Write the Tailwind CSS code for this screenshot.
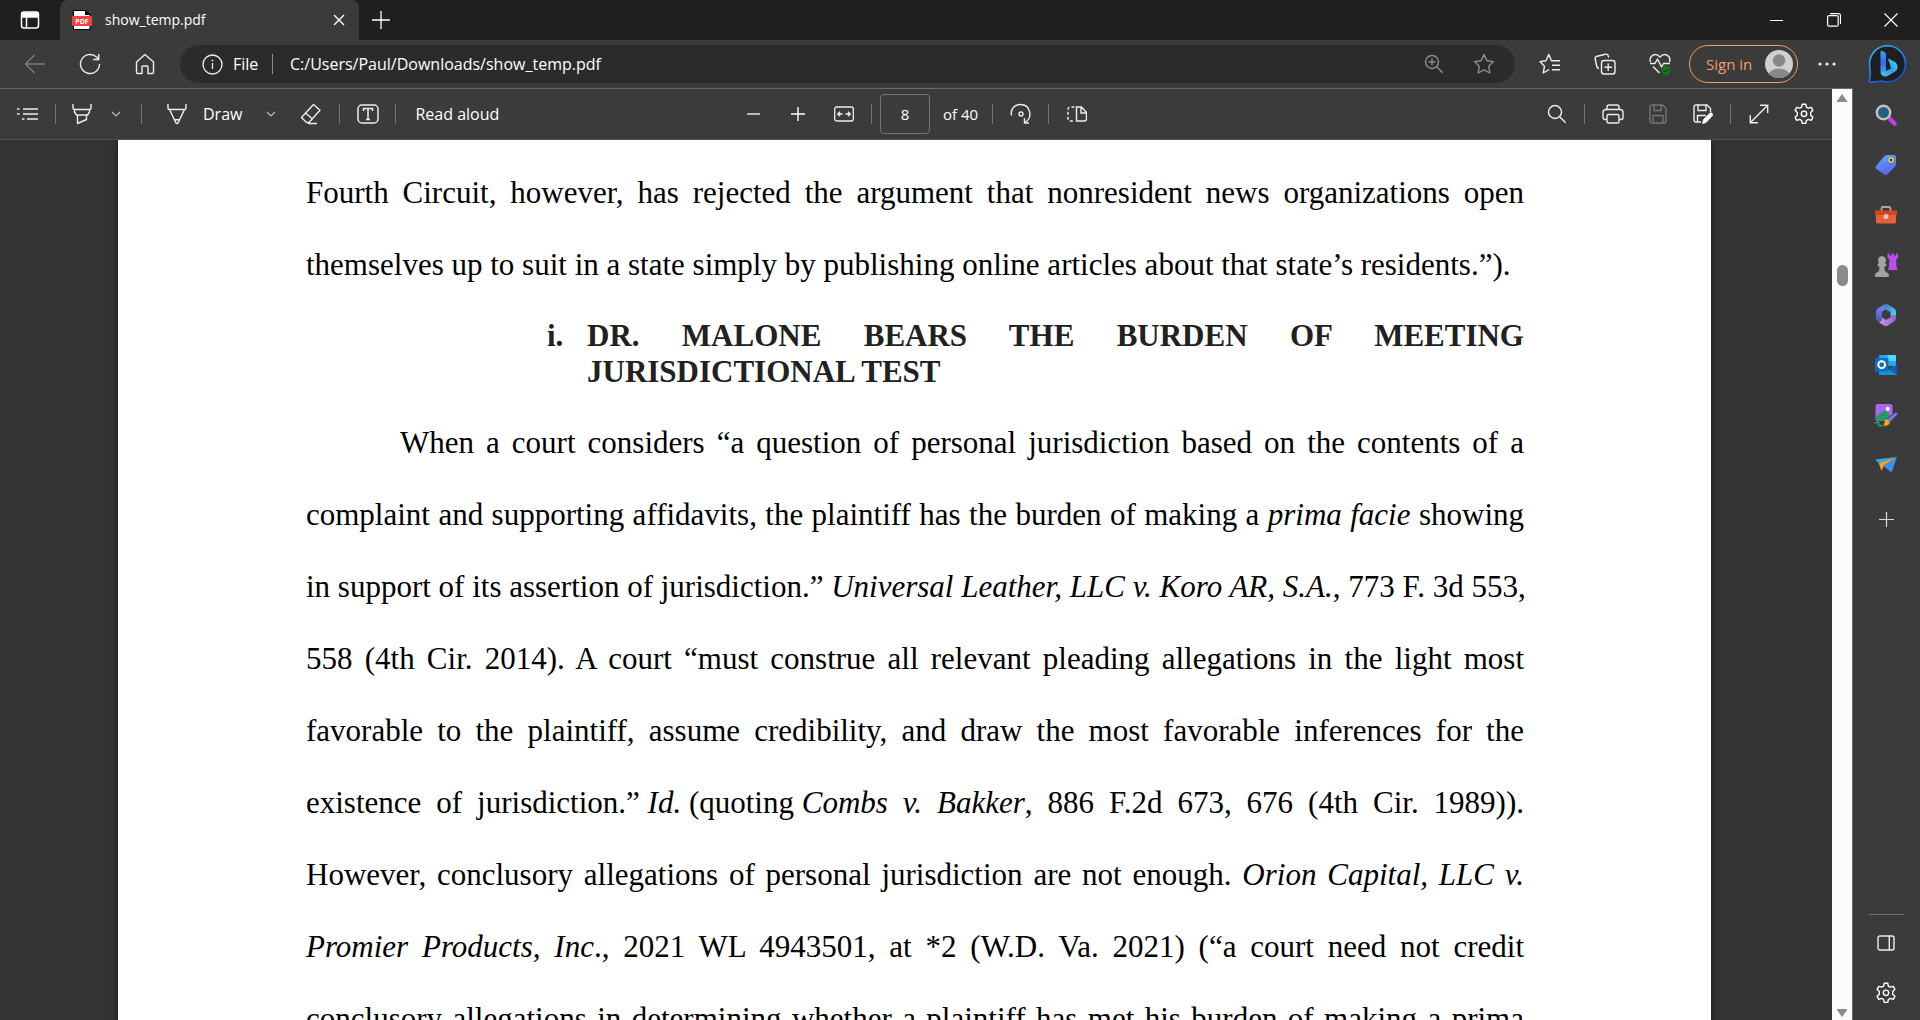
<!DOCTYPE html>
<html lang="en">
<head>
    <meta charset="UTF-8">
    <meta name="viewport" content="width=device-width, initial-scale=1.0">
    <title>show_temp.pdf</title>
    <script src="https://cdn.jsdelivr.net/npm/@tailwindcss/browser@4"></script>
</head>
<body class="h-screen overflow-hidden flex flex-col bg-[#3b3b3b] text-white font-['Open_Sans','Noto_Sans',sans-serif]">

    <!-- Shared icons -->
    <svg class="hidden">
        <symbol id="chevron" viewBox="0 0 10 10"><path d="M1 3l4 4 4-4" fill="none" stroke="#bbb" stroke-width="1.2"/></symbol>
        <symbol id="gear" viewBox="0 0 22 22">
            <g fill="none" stroke="currentColor" stroke-width="1.4" stroke-linejoin="round">
                <path d="M9.3 1.2h3.4l.7 2.9 1.9 1.1 2.9-.9 1.7 3-2.2 2.1v2.8l2.2 2.1-1.7 3-2.9-.9-1.9 1.1-.7 2.9H9.300l-.7-2.9-1.9-1.1-2.9.9-1.7-3 2.2-2.1V9.400L2.100 7.300l1.7-3 2.900.9 1.900-1.100z"/>
                <circle cx="11" cy="10.800" r="2.700"/>
            </g>
        </symbol>
    </svg>

    <!-- Tab strip -->
    <header class="h-10 shrink-0 flex items-end bg-[#1f1f1f]">
        <button class="w-[60px] h-10 grid place-items-center" aria-label="Tab actions">
            <svg width="20" height="20" viewBox="0 0 20 20" fill="none" stroke="#fff" stroke-width="1.5"><rect x="1.5" y="2" width="17" height="16" rx="2.5"/><path d="M2 3h16v4H2z" fill="#fff"/><path d="M6.500 7v11"/></svg>
        </button>
        <div class="w-[299px] h-10 pl-3 pr-2 flex items-center rounded-t-lg bg-[#3b3b3b]">
            <svg width="20" height="20" viewBox="0 0 20 20"><path d="M1.500.5h12l4.500 4v15H1.500z" fill="#fff" stroke="#000"/><path d="M13 0l5.500 5H13z" fill="#000"/><rect y="6" width="20" height="10" rx="1" fill="#f0423f"/><text x="10" y="13.5" text-anchor="middle" font-size="7" font-weight="700" fill="#fff">PDF</text></svg>
            <span class="ml-[13px] text-sm">show_temp.pdf</span>
            <button class="ml-auto size-6 grid place-items-center" aria-label="Close tab">
                <svg width="12" height="12" viewBox="0 0 12 12" stroke="#fff" stroke-width="1.4"><path d="M1 1l10 10M11 1L1 11"/></svg>
            </button>
        </div>
        <button class="w-11 h-10 grid place-items-center" aria-label="New tab">
            <svg width="18" height="18" viewBox="0 0 18 18" stroke="#fff" stroke-width="1.3"><path d="M9 0v18M0 9h18"/></svg>
        </button>
        <div class="ml-auto flex">
            <button class="w-[57px] h-10 grid place-items-center" aria-label="Minimize"><svg width="14" height="14" viewBox="0 0 14 14"><path d="M0 7.500h13" stroke="#fff"/></svg></button>
            <button class="w-[57px] h-10 grid place-items-center" aria-label="Restore"><svg width="14" height="14" viewBox="0 0 14 14" fill="none" stroke="#fff" stroke-width="1.2"><rect x=".6" y="2.6" width="10.6" height="10.6" rx="1.5"/><path d="M3 .6h8.500a2 2 0 0 1 2 2V11"/></svg></button>
            <button class="w-[58px] h-10 grid place-items-center" aria-label="Close"><svg width="14" height="14" viewBox="0 0 14 14" stroke="#fff" stroke-width="1.2"><path d="M.5.5l13 13M13.500.5l-13 13"/></svg></button>
        </div>
    </header>

    <!-- Address bar -->
    <nav class="h-12 shrink-0 flex items-center pl-[7px] pr-3">
        <button class="w-[55px] grid place-items-center text-[#7d7d7d]" aria-label="Back"><svg width="22" height="20" viewBox="0 0 22 20" fill="none" stroke="currentColor" stroke-width="1.3"><path d="M21 10H2M10.500 1L1.500 10l9 9"/></svg></button>
        <button class="w-[55px] grid place-items-center" aria-label="Refresh"><svg width="22" height="22" viewBox="0 0 22 22" fill="none" stroke="#eee" stroke-width="1.4"><path d="M20.500 11a9.500 9.500 0 1 1-3-6.900l2 2M19.700 1v5.500h-5.500"/></svg></button>
        <button class="w-[55px] grid place-items-center" aria-label="Home"><svg width="20" height="22" viewBox="0 0 20 22" fill="none" stroke="#eee" stroke-width="1.4" stroke-linejoin="round"><path d="M1.500 9L10 1.500 18.500 9v10.500a1 1 0 0 1-1 1H13v-6.500a1 1 0 0 0-1-1H8a1 1 0 0 0-1 1v6.500H2.500a1 1 0 0 1-1-1z"/></svg></button>
        <div class="flex-1 h-[38px] ml-2 pl-[22px] pr-4 flex items-center rounded-full bg-[#2b2b2b] text-base">
            <svg width="21" height="21" viewBox="0 0 21 21" fill="none" stroke="#eee" stroke-width="1.3"><circle cx="10.5" cy="10.5" r="9.5"/><path d="M10.500 9v6"/><circle cx="10.5" cy="6.5" r=".6" fill="#eee" stroke-width=".8"/></svg>
            <span class="w-[39px] ml-[10px]">File</span>
            <span class="w-px h-5 bg-[#8a8a8a]"></span>
            <input class="flex-1 ml-[17px] outline-none" type="text" aria-label="Address" value="C:/Users/Paul/Downloads/show_temp.pdf">
            <button class="w-[51px] grid place-items-center text-[#8f8f8f]" aria-label="Zoom"><svg width="20" height="20" viewBox="0 0 20 20" fill="none" stroke="currentColor" stroke-width="1.4"><circle cx="8" cy="8" r="6.5"/><path d="M12.700 12.700l6 6M8 4.500v7M4.500 8h7"/></svg></button>
            <button class="w-[30px] h-6 ml-[10px] grid place-items-center text-[#8f8f8f]" aria-label="Favorite"><svg width="22" height="22" viewBox="0 0 22 22" fill="none" stroke="currentColor" stroke-width="1.4" stroke-linejoin="round"><path d="M11 1.500l2.900 6.200 6.600.9-4.800 4.700 1.200 6.700-5.900-3.200L5.100 20l1.200-6.700L1.500 8.600l6.600-.9z"/></svg></button>
        </div>
        <div class="flex items-center ml-[7px]">
            <button class="w-[55px] grid place-items-center" aria-label="Favorites"><svg width="22" height="22" viewBox="0 0 22 22" fill="none" stroke="#eee" stroke-width="1.4" stroke-linejoin="round"><path d="M13 7.700h-.5L9.800 1.500 7 7.700l-6 .9 4.500 4.600L4.200 20l6-3.500M13 7.700h8M13 12.200h8M13 16.700h8"/></svg></button>
            <button class="w-[55px] grid place-items-center" aria-label="Collections"><svg width="22" height="22" viewBox="0 0 22 22" fill="none" stroke="#eee" stroke-width="1.4" stroke-linejoin="round"><rect x="7.5" y="7.5" width="13.5" height="13.5" rx="2.5"/><path d="M14.200 10.500v7.500M10.500 14.200H18M5 15.500c-1.500-.3-2-1-2.200-2L1.200 6c-.3-1.500.4-2.500 1.800-2.800l8.500-2c1.500-.3 2.500.5 2.800 1.800l.4 1.500"/></svg></button>
            <button class="w-[55px] grid place-items-center" aria-label="Browser essentials"><svg width="22" height="22" viewBox="0 0 22 22" fill="none" stroke="#eee" stroke-width="1.4" stroke-linejoin="round"><path d="M1.500 9C0 5 3 1.500 6.200 1.500c2 0 3.500.8 4.800 2.700 1.300-1.900 2.800-2.700 4.800-2.700C19 1.500 22 5 20.500 9M1 10.500h5l2.500-4.500 4 8 2-3.500H21M4 13.500l6.500 6.500"/><circle cx="17" cy="17.5" r="4.5" fill="#0f7b0f" stroke="none"/><path d="M15 17.500l1.500 1.500 2.500-2.700" stroke="#123" stroke-width="1"/></svg></button>
            <button class="w-[109px] h-[38px] ml-[2px] pl-4 pr-1 flex items-center justify-between rounded-full border border-[#f0a068] text-[#f0a068] text-[15px]">Sign in
                <svg width="28" height="28" viewBox="0 0 28 28"><clipPath id="face"><circle cx="14" cy="14" r="14"/></clipPath><g clip-path="url(#face)"><path d="M0 0h28v28H0z" fill="#d2d0ce"/><circle cx="14" cy="10.5" r="6.2" fill="#8a8886"/><ellipse cx="14" cy="25" rx="10.5" ry="6.5" fill="#8a8886"/></g></svg>
            </button>
            <button class="w-[58px] grid place-items-center" aria-label="Settings and more"><svg width="18" height="4" viewBox="0 0 18 4" fill="#eee"><circle cx="2" cy="2" r="1.6"/><circle cx="9" cy="2" r="1.6"/><circle cx="16" cy="2" r="1.6"/></svg></button>
            <button class="ml-3" aria-label="Discover"><svg width="40" height="40" viewBox="0 0 40 40">
                <defs>
                    <linearGradient id="ring" x1="0" y1="0" x2=".6" y2="1"><stop stop-color="#2cc5f0"/><stop offset=".6" stop-color="#1f7df0"/><stop offset="1" stop-color="#1a4fd8"/></linearGradient>
                    <linearGradient id="stem" x1="0" y1="0" x2="0" y2="1"><stop stop-color="#3aa5f8"/><stop offset=".5" stop-color="#2b6df5"/><stop offset="1" stop-color="#3fb0f8"/></linearGradient>
                    <linearGradient id="bowl" x1="1" y1="0" x2="0" y2="1"><stop stop-color="#3fe0e8"/><stop offset=".5" stop-color="#2f9cf5"/><stop offset="1" stop-color="#4fc0ff"/></linearGradient>
                </defs>
                <path d="M19.500 1.800a18 18 0 0 1 0 36c-3 0-5-.9-7.500-.6-3 .3-6 1-9 1-1.500 0-1.800-.8-1.500-2 .6-2.400 1-4.500.8-7.500-.2-3-.8-5-.8-8.900a18 18 0 0 1 18-18z" fill="#1f1f1f" stroke="url(#ring)" stroke-width="1.6"/>
                <path d="M12.500 7.500c0-.8.6-1 1.200-.7l3 1.400c.9.4 1.300 1 1.300 2V27l-4 4c-1-.7-1.500-1.800-1.500-3z" fill="url(#stem)"/>
                <path d="M20.300 15.800c-.3-.8.300-1.200 1-.8l4.700 2.500c2.500 1.300 3.500 3.300 3.500 5.500 0 2.300-1 3.800-3 5l-7 4c-2.300 1.300-5.500.4-6.500-2.500L23 24.500l-1-4z" fill="url(#bowl)"/>
            </svg></button>
        </div>
    </nav>

    <div class="flex-1 min-h-0 flex">
        <main class="flex-1 min-w-0 flex flex-col border-t border-[#6b6b6b] bg-[#333]">
            <!-- PDF toolbar -->
            <div class="h-[51px] shrink-0 grid grid-cols-[1fr_auto_1fr] items-center bg-[#3b3b3b] border-b border-[#505050] text-base">
                <div class="flex items-center">
                    <button class="w-[55px] grid place-items-center" aria-label="Contents"><svg width="22" height="14" viewBox="0 0 22 14" stroke="#eee" stroke-width="1.4"><path d="M6 2h15M6 7h15M10 12h11M0 2h2.500M0 7h2.500M5 12h2.500"/></svg></button>
                    <span class="w-px h-5 bg-[#767676]"></span>
                    <button class="w-[52px] grid place-items-center" aria-label="Highlight"><svg width="20" height="22" viewBox="0 0 20 22" fill="none" stroke="#eee" stroke-width="1.4" stroke-linejoin="round"><path d="M1 1v4a1.500 1.500 0 0 0 1.500 1.500h15A1.500 1.500 0 0 0 19 5V1M2.500 6.500V9l2 3h11l2-3V6.500M5.500 12v8.500l9-4V12"/></svg></button>
                    <button class="w-4 grid place-items-center" aria-label="Highlight colors"><svg width="10" height="10"><use href="#chevron"/></svg></button>
                    <span class="w-px h-5 ml-[17px] bg-[#767676]"></span>
                    <button class="h-8 ml-[25px] flex items-center gap-4"><svg width="20" height="22" viewBox="0 0 20 22" fill="none" stroke="#eee" stroke-width="1.4" stroke-linejoin="round"><path d="M1 1v4a1.500 1.500 0 0 0 1.500 1.500h15A1.500 1.500 0 0 0 19 5V1M2.500 6.500l6 12.500c.6 2 2.400 2 3 0l6-12.500M8 16.800h4"/></svg>Draw</button>
                    <button class="w-4 ml-[21px] grid place-items-center" aria-label="Draw options"><svg width="10" height="10"><use href="#chevron"/></svg></button>
                    <button class="w-11 ml-[10px] grid place-items-center" aria-label="Erase"><svg width="22" height="22" viewBox="0 0 22 22" fill="none" stroke="#eee" stroke-width="1.4" stroke-linejoin="round"><path d="M13.500 1.500l6.500 5.800L9 19.500H6.500L1.500 14.500zM5 9.500l7.500 6.500M8 20.500h9"/></svg></button>
                    <span class="w-px h-5 ml-[6px] bg-[#767676]"></span>
                    <button class="w-[55px] grid place-items-center" aria-label="Add text"><svg width="22" height="20" viewBox="0 0 22 20" fill="none" stroke="#eee" stroke-width="1.5"><rect x="1" y="1" width="20" height="18" rx="4"/><path d="M6.500 7V4.500h9V7M11 4.500v11M9 15.500h4"/></svg></button>
                    <span class="w-px h-5 bg-[#767676]"></span>
                    <button class="ml-[19px] whitespace-nowrap">Read aloud</button>
                </div>
                <div class="flex items-center pl-1">
                    <button class="w-11 grid place-items-center" aria-label="Zoom out"><svg width="14" height="14" viewBox="0 0 14 14"><path d="M0 7h13" stroke="#bbb" stroke-width="2"/></svg></button>
                    <button class="w-11 grid place-items-center" aria-label="Zoom in"><svg width="14" height="14" viewBox="0 0 14 14"><path d="M0 7h14M7 0v14" stroke="#fff" stroke-width="1.4"/></svg></button>
                    <button class="w-12 grid place-items-center" aria-label="Fit to width"><svg width="20" height="16" viewBox="0 0 20 16" fill="none" stroke="#eee" stroke-width="1.3"><rect x=".7" y="1" width="18.6" height="14" rx="2"/><path d="M8.500 8H4M6 5.700L3.700 8 6 10.300M11.500 8H16M14 5.700L16.300 8 14 10.300"/></svg></button>
                    <span class="w-px h-5 ml-[3px] bg-[#767676]"></span>
                    <input class="w-[50px] h-10 ml-2 rounded-sm border border-[#767676] text-center text-[15px] outline-none" type="text" aria-label="Page number" value="8">
                    <span class="w-[49px] ml-[13px] text-[15px]">of 40</span>
                    <span class="w-px h-5 bg-[#767676]"></span>
                    <button class="w-[55px] grid place-items-center" aria-label="Rotate"><svg width="22" height="22" viewBox="0 0 22 22" fill="none" stroke="#eee" stroke-width="1.4"><path d="M1.500 12.500C0 6 5 1.500 10.500 1.500c9.500 0 13 12.500 4.500 18M14.500 15v5h4.500"/><circle cx="11" cy="11" r="2"/></svg></button>
                    <span class="w-px h-5 bg-[#767676]"></span>
                    <button class="w-[55px] grid place-items-center" aria-label="Page view"><svg width="20" height="16" viewBox="0 0 20 16" fill="none" stroke="#eee" stroke-width="1.4"><path d="M9.500 1v14h8a2 2 0 0 0 2-2V6.500l-5-5.500zM14 1v6h5.500"/><path d="M7.500 1H3a2 2 0 0 0-2 2v10a2 2 0 0 0 2 2h4.500" stroke-dasharray="3 2"/></svg></button>
                </div>
                <div class="flex items-center justify-end">
                    <button class="w-[55px] grid place-items-center" aria-label="Find"><svg width="20" height="20" viewBox="0 0 20 20" fill="none" stroke="#eee" stroke-width="1.4"><circle cx="8" cy="8" r="6.5"/><path d="M12.700 12.700l6 6"/></svg></button>
                    <span class="w-px h-5 bg-[#767676]"></span>
                    <button class="w-[55px] grid place-items-center" aria-label="Print"><svg width="22" height="20" viewBox="0 0 22 20" fill="none" stroke="#eee" stroke-width="1.4"><path d="M5 5V3a2 2 0 0 1 2-2h8a2 2 0 0 1 2 2v2M5 15.500H3a2 2 0 0 1-2-2V8.500a3 3 0 0 1 3-3h14a3 3 0 0 1 3 3v5a2 2 0 0 1-2 2h-2"/><rect x="5" y="10.5" width="12" height="8.5" rx="1.5"/></svg></button>
                    <button class="w-9 grid place-items-center text-[#757575]" aria-label="Save"><svg width="18" height="20" viewBox="0 0 18 20" fill="none" stroke="currentColor" stroke-width="1.4"><path d="M1 3a2 2 0 0 1 2-2h10.500L17 4.500V17a2 2 0 0 1-2 2H3a2 2 0 0 1-2-2zM5 1v5.500h7V1M4 19v-7.500h10V19"/></svg></button>
                    <button class="w-[54px] grid place-items-center" aria-label="Save as"><svg width="20" height="20" viewBox="0 0 20 20" fill="none" stroke="#eee" stroke-width="1.4"><path d="M8 18H3a2 2 0 0 1-2-2V3a2 2 0 0 1 2-2h11l3.500 3.500V8M5 1v5.500h8V1M4.500 18v-6.500H13"/><path d="M9.500 19.500l1-4 6.500-6.500c1-1 3.500 1 2.500 2.500L13 18.500z" fill="#fff" stroke="#fff" stroke-width=".8"/></svg></button>
                    <span class="w-px h-5 bg-[#767676]"></span>
                    <button class="w-[55px] grid place-items-center" aria-label="Full screen"><svg width="20" height="20" viewBox="0 0 20 20" fill="none" stroke="#eee" stroke-width="1.4"><path d="M1.500 18.500l17-17M11 1.300h7.700V9M1.300 11v7.700H9"/></svg></button>
                    <button class="w-9 mr-[10px] grid place-items-center" aria-label="PDF settings"><svg width="22" height="22"><use href="#gear"/></svg></button>
                </div>
            </div>

            <!-- Document page -->
            <div class="flex-1 min-h-0 overflow-hidden pl-[118px] pr-[121px]">
                <article class="pl-[188px] pr-[187px] pt-[17px] pb-10 bg-white text-black font-['Liberation_Serif','Times_New_Roman',serif] text-[31px] leading-[72px] whitespace-nowrap shadow-[0_0_6px_rgba(0,0,0,0.5)]">
                    <p>
                        <span class="block [text-align-last:justify]">Fourth Circuit, however, has rejected the argument that nonresident news organizations open</span>
                        <span class="block">themselves up to suit in a state simply by publishing online articles about that state’s residents.”).</span>
                    </p>
                    <h2 class="flex mt-[17px] pl-[241px] font-bold leading-9 text-[#212121]">
                        <span class="w-10">i.</span>
                        <span class="flex-1">
                            <span class="block [text-align-last:justify]">DR. MALONE BEARS THE BURDEN OF MEETING</span>
                            <span class="block">JURISDICTIONAL TEST</span>
                        </span>
                    </h2>
                    <p class="mt-[17px]">
                        <span class="block pl-[94px] [text-align-last:justify]">When a court considers “a question of personal jurisdiction based on the contents of a</span>
                        <span class="block [text-align-last:justify]">complaint and supporting affidavits, the plaintiff has the burden of making a <i>prima facie</i> showing</span>
                        <span class="block [text-align-last:justify]">in support of its assertion of jurisdiction.” <i>Universal Leather, LLC v. Koro AR, S.A.</i>, 773 F. 3d 553,</span>
                        <span class="block [text-align-last:justify]">558 (4th Cir. 2014). A court “must construe all relevant pleading allegations in the light most</span>
                        <span class="block [text-align-last:justify]">favorable to the plaintiff, assume credibility, and draw the most favorable inferences for the</span>
                        <span class="block [text-align-last:justify]">existence of <span class="inline-block">jurisdiction.” <i>Id.</i> (quoting <i>Combs</i></span> <i>v. Bakker</i>, 886 F.2d 673, 676 (4th Cir. 1989)).</span>
                        <span class="block [text-align-last:justify]">However, conclusory allegations of personal jurisdiction are not enough. <i>Orion Capital, LLC v.</i></span>
                        <span class="block [text-align-last:justify]"><i>Promier Products, Inc</i>., 2021 WL 4943501, at *2 (W.D. Va. 2021) (“a court need not credit</span>
                        <span class="block [text-align-last:justify]">conclusory allegations in determining whether a plaintiff has met his burden of making a prima</span>
                    </p>
                </article>
            </div>
        </main>

        <!-- Scrollbar -->
        <div class="w-[21px] shrink-0 flex flex-col items-center pt-[5px] pb-[3px] bg-[#fcfcfc] border-t border-r border-[#6b6b6b]">
            <svg width="12" height="8" viewBox="0 0 12 8"><path d="M6 0l5 7a.6.6 0 0 1-.5 1h-9A.6.6 0 0 1 1 7z" fill="#8b8b8b"/></svg>
            <div class="w-[11px] h-[21px] mt-[163px] rounded-full bg-[#8b8b8b]"></div>
            <svg class="mt-auto" width="12" height="8" viewBox="0 0 12 8"><path d="M6 8L1 1a.6.6 0 0 1 .5-1h9A.6.6 0 0 1 11 1z" fill="#8b8b8b"/></svg>
        </div>

        <!-- Sidebar -->
        <aside class="w-[67px] shrink-0 flex flex-col items-center pt-[2px] pr-px">
            <button class="size-[50px] grid place-items-center" aria-label="Search"><svg width="22" height="22" viewBox="0 0 22 22"><path d="M14 14l6 6" stroke="#a8a8a8" stroke-width="2"/><path d="M15.500 15.500l4 4" stroke="#c03df0" stroke-width="4.5" stroke-linecap="round"/><circle cx="8.5" cy="8.5" r="6.7" fill="#1f6285" stroke="#c4c2c0" stroke-width="2.4"/></svg></button>
            <button class="size-[50px] grid place-items-center" aria-label="Shopping"><svg width="22" height="22" viewBox="0 0 22 22"><defs><linearGradient id="tag" x1="0" y1="0" x2=".4" y2="1"><stop stop-color="#62aafa"/><stop offset="1" stop-color="#5566f0"/></linearGradient></defs><path d="M11.500 1h7.500a2 2 0 0 1 2 2v7.500a3 3 0 0 1-1 2.200l-7.500 7.500a2.500 2.500 0 0 1-3.500 0L1.500 15a2.500 2.500 0 0 1 0-3.500L9.500 2a3 3 0 0 1 2-1z" fill="url(#tag)"/><circle cx="16" cy="6" r="2" fill="#333" stroke="#f5cf1e" stroke-width="1.4"/></svg></button>
            <button class="size-[50px] grid place-items-center" aria-label="Tools"><svg width="24" height="20" viewBox="0 0 24 20"><path d="M7.500 6V3.500A1.500 1.500 0 0 1 9 2h6a1.500 1.500 0 0 1 1.500 1.500V6" fill="none" stroke="#aaa" stroke-width="1.8"/><path d="M2 8h20v9a1.500 1.500 0 0 1-1.500 1.500h-17A1.500 1.500 0 0 1 2 17z" fill="#e8603a"/><path d="M2 5.500h20a1 1 0 0 1 1 1V10H1V6.500a1 1 0 0 1 1-1z" fill="#d5451c"/><circle cx="12" cy="11.5" r="2.5" fill="#ccc"/></svg></button>
            <button class="size-[50px] grid place-items-center" aria-label="Games"><svg width="24" height="24" viewBox="0 0 24 24"><path d="M13.500.5h2v2h2v-2h2.500v2h2v-2h2v4.500l-2 1.500.5 7 1 3.500h-9.500l1-3.500.5-7-2-1.500z" fill="#b94df0"/><path d="M8 3a4.200 4.200 0 0 1 3 7l1.500 1v1.500L10.300 14l.5 4 3.500 2.500c1 1 .8 3.500 0 3.500H1.500c-.8 0-1-2.500 0-3.500L5 18l.5-4-2-1.500V11L5 10A4.200 4.200 0 0 1 8 3z" fill="#a5a3a1"/></svg></button>
            <button class="size-[50px] grid place-items-center" aria-label="Microsoft 365"><svg width="22" height="24" viewBox="0 0 22 24">
                <defs>
                    <linearGradient id="m1" x1="0" y1="0" x2="0" y2="1"><stop stop-color="#7f86ea"/><stop offset="1" stop-color="#4a55c0"/></linearGradient>
                    <linearGradient id="m2" x1="0" y1="0" x2="1" y2="0"><stop stop-color="#c79af0"/><stop offset="1" stop-color="#8a68c0"/></linearGradient>
                    <linearGradient id="m3" x1="0" y1="0" x2="1" y2="1"><stop stop-color="#3b74d0"/><stop offset="1" stop-color="#50d8f5"/></linearGradient>
                </defs>
                <path d="M9.500 1.500L3 5.200a4 4 0 0 0-2 3.500V15a4 4 0 0 0 2 3.500l1 .5 3-3V9l4-3z" fill="url(#m1)"/>
                <path d="M9.500 1.500a3.500 3.500 0 0 1 3.500 0l6 3.700a4 4 0 0 1 2 3.500V13l-5.500-1V9L8.500 5.500z" fill="url(#m3)"/>
                <path d="M21 12v3a4 4 0 0 1-2 3.500L13 22.500a4 4 0 0 1-4 0L3.500 19C6 18.500 7.500 17 7 14.500l4 2.500 4.500-2.700V12z" fill="url(#m2)"/>
            </svg></button>
            <button class="size-[50px] grid place-items-center" aria-label="Outlook"><svg width="22" height="22" viewBox="0 0 22 22"><path d="M5 1h15a1 1 0 0 1 1 1v10H4V2a1 1 0 0 1 1-1z" fill="#28a8ea"/><path d="M12.500 1H20a1 1 0 0 1 1 1v5h-8.500z" fill="#50d9ff"/><path d="M4 10l9 6 8-5v9a1 1 0 0 1-1 1H4z" fill="#1490df"/><path d="M22 10.500v10L14 16z" fill="#0c5fae"/><rect y="4" width="13.5" height="13.5" rx="1.2" fill="#0f6cbd"/><circle cx="6.7" cy="10.7" r="3.4" fill="none" stroke="#fff" stroke-width="1.9"/></svg></button>
            <button class="size-[50px] grid place-items-center" aria-label="Image Creator"><svg width="24" height="24" viewBox="0 0 24 24"><rect x="1.5" y="1" width="17" height="17" rx="2" fill="#a867ee"/><path d="M2 14l6-5c1.500-1.200 3-1.200 4.500 0l5 4-4 4.500H3.500A2 2 0 0 1 1.500 16z" fill="#1f9a63"/><circle cx="13.7" cy="5.8" r="2" fill="#fff"/><path d="M21.500 9.500c1.500-1 3 .5 2 2L16 19l-3-3z" fill="#8079f0" stroke="#3b3b3b" stroke-width=".8"/><path d="M13 16l3 3c0 3-4 4.500-7 3.500 2-1 1-5.500 4-6.500z" fill="#f5a81c"/><path d="M.5 20.500c3-2 5-1.500 4 .5s1.500 2 4 1.500" fill="none" stroke="#27a877" stroke-width="1.5"/></svg></button>
            <button class="size-[50px] grid place-items-center" aria-label="Drop"><svg width="22" height="18" viewBox="0 0 22 18"><path d="M0 3.500L22 1 5 8.500z" fill="#35a8e8"/><path d="M4 7.500L22 1 9 9.500l-2.500 5.500z" fill="#f5a81c"/><path d="M22 1l-5.500 15.500L8.500 10z" fill="#3f8ff0"/></svg></button>
            <button class="size-[50px] mt-1 grid place-items-center" aria-label="Customize"><svg width="15" height="15" viewBox="0 0 15 15"><path d="M7.500 0v15M0 7.500h15" stroke="#ddd" stroke-width="1.2"/></svg></button>
            <hr class="w-[35px] mt-auto border-[#6f6f6f]">
            <button class="size-[50px] mt-[3px] grid place-items-center" aria-label="Hide sidebar"><svg width="18" height="16" viewBox="0 0 18 16" fill="none" stroke="#eee" stroke-width="1.4"><rect x="1" y="1" width="16" height="14" rx="2"/><path d="M12.300 1v14"/></svg></button>
            <button class="size-[50px] mb-[2px] grid place-items-center" aria-label="Sidebar settings"><svg width="22" height="22"><use href="#gear"/></svg></button>
        </aside>
    </div>
</body>
</html>
